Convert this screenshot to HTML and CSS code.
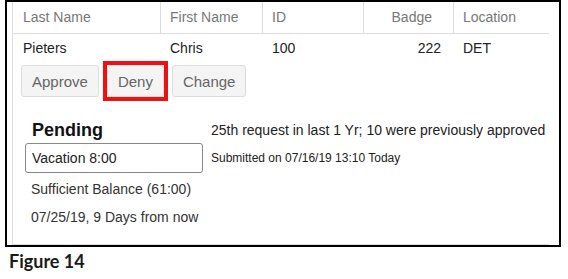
FILE: index.html
```html
<!DOCTYPE html>
<html lang="en">
<head>
<meta charset="UTF-8">
<meta name="viewport" content="width=device-width, initial-scale=1.0">
<title>Figure 14</title>
<link rel="stylesheet" href="styles.css">
</head>
<body>
<div class="shot">
  <div class="panel">
    <div class="row head">
      <div class="cell">Last Name</div>
      <div class="cell">First Name</div>
      <div class="cell">ID</div>
      <div class="cell num">Badge</div>
      <div class="cell">Location</div>
    </div>
    <div class="row">
      <div class="cell">Pieters</div>
      <div class="cell">Chris</div>
      <div class="cell">100</div>
      <div class="cell num">222</div>
      <div class="cell">DET</div>
    </div>
    <div class="actions">
      <button class="btn">Approve</button>
      <button class="btn marked">Deny</button>
      <button class="btn">Change</button>
    </div>
    <div class="detail">
      <div class="status">Pending</div>
      <div class="history">25th request in last 1 Yr; 10 were previously approved</div>
      <div class="type">Vacation 8:00</div>
      <div class="submitted">Submitted on 07/16/19 13:10 Today</div>
      <div class="note balance">Sufficient Balance (61:00)</div>
      <div class="note when">07/25/19, 9 Days from now</div>
    </div>
  </div>
</div>
<div class="caption">Figure 14</div>
</body>
</html>
```

FILE: styles.css
```css
body {
  margin: 0;
  background: #ffffff;
  font-family: "Liberation Sans", Arial, sans-serif;
  color: #333;
}

.shot {
  margin-left: 5px;
  width: 552px;
  height: 243px;
  border: 2px solid #000;
  overflow: hidden;
}

.panel {
  margin-left: 5px;
  width: 536px;
  height: 242px;
  border-left: 1px solid #ddd;
  border-bottom: 1px solid #ddd;
}

.row {
  display: grid;
  grid-template-columns: 147px 102px 101px 90px 96px;
  font-size: 14px;
  height: 28px;
  line-height: 28px;
  color: #222;
}

.row.head {
  height: 31px;
  line-height: 31px;
  color: #777;
  border-bottom: 1px solid #ddd;
}

.cell {
  padding-left: 10px;
  white-space: nowrap;
}

.head .cell + .cell {
  border-left: 1px solid #ddd;
  padding-left: 9px;
}

.cell.num {
  text-align: right;
  padding-right: 12px;
}

.head .cell.num {
  padding-right: 21px;
}

.actions {
  display: flex;
  gap: 8px;
  margin: 3px 0 0 8px;
}

.btn {
  position: relative;
  height: 32px;
  padding: 0 10px;
  font-family: "Liberation Sans", Arial, sans-serif;
  font-size: 15px;
  color: #666;
  background: #f4f4f4;
  border: 1px solid #ddd;
  border-radius: 3px;
}

/* square red highlight drawn over the button */
.btn.marked::after {
  content: "";
  position: absolute;
  inset: -5px;
  border: 4px solid #ee1111;
  pointer-events: none;
}

.detail {
  display: grid;
  grid-template-columns: 178px auto;
  column-gap: 8px;
  margin: 21px 0 0 12px;
  align-items: center;
}

.status {
  font-size: 18px;
  font-weight: bold;
  color: #111;
  line-height: 22px;
  padding-left: 7px;
}

.history {
  font-size: 14px;
  line-height: 22px;
  padding-top: 1px;
  color: #222;
}

.type {
  margin-top: 2px;
  height: 28px;
  line-height: 28px;
  padding-left: 6px;
  font-size: 14px;
  color: #222;
  border: 1px solid #888;
  border-radius: 3px;
}

.submitted {
  margin-top: 1px;
  font-size: 12px;
  color: #222;
}

.note {
  grid-column: 1 / 3;
  font-size: 14px;
  line-height: 20px;
  padding-left: 6px;
}

.balance {
  margin-top: 6px;
}

.when {
  margin-top: 8px;
}

.caption {
  margin: 3px 0 0 9px;
  font-family: Lato, "Open Sans", sans-serif;
  font-weight: bold;
  font-size: 18px;
  color: #1a1a1a;
}
```
